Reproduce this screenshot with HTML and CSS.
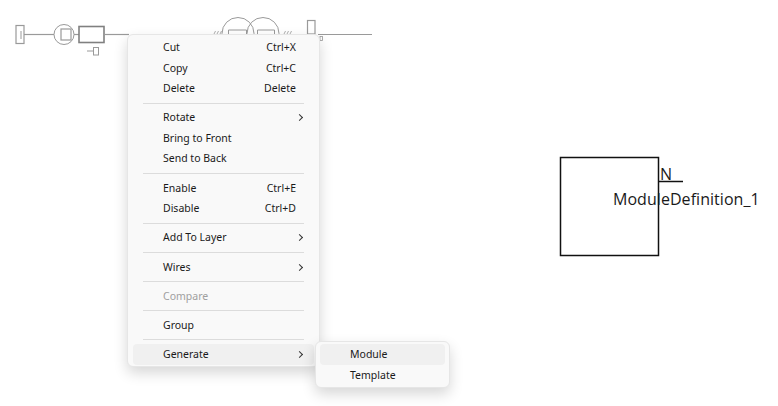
FILE: index.html
```html
<!DOCTYPE html>
<html lang="en">
<head>
  <meta charset="UTF-8">
  <meta name="viewport" content="width=device-width, initial-scale=1.0">
  <title>Module editor</title>
  <link rel="stylesheet" href="styles.css">
</head>
<body>
  <div class="canvas">
    <!-- schematic behind the menu -->
    <svg class="schematic" width="778" height="406" viewBox="0 0 778 406" fill="none">
      <g stroke="#9a9a9a" stroke-width="1.200">
        <rect x="16" y="25.500" width="8" height="18" />
        <path d="M21 31v8" stroke-width="1" />
        <path d="M24 34.500h30" />
        <circle cx="64" cy="34.500" r="10" stroke-width="1" />
        <rect x="61" y="29" width="10" height="11" />
        <path d="M74 34.500h5" />
        <rect x="79" y="26.500" width="25" height="16" stroke="#808080" stroke-width="1.600" />
        <path d="M104 34.500h25" />
        <rect x="93.500" y="47.500" width="5" height="7.500" stroke-width="1" />
        <path d="M87 51h6.500" stroke-width="1" />
        <circle cx="238" cy="33.500" r="16" stroke-width="1" />
        <circle cx="263" cy="33.500" r="16" stroke-width="1" />
        <path d="M228.500 34v-4h18v4M257.500 34v-4h17v4" stroke-width="1" />
        <path d="M214 34l1.500-3M217 34l1.500-3M220 34l1.500-3M284 34l1.500-3M287 34l1.500-3M290 34l1.500-3" stroke-width="0.800" />
        <rect x="307.500" y="20.500" width="7.500" height="13.500" />
        <path d="M318 34.500h54" />
        <rect x="320" y="36.500" width="2.500" height="4" stroke-width="0.800" />
      </g>
      <g stroke="#111" stroke-width="1.500">
        <rect x="560.500" y="157.500" width="98" height="98" />
        <path d="M658 181.500h25" />
      </g>
    </svg>
    <span class="pin-label">N</span>
    <span class="module-label">ModuleDefinition_1</span>

    <div class="menu main-menu">
      <div class="item"><span>Cut</span><span class="key">Ctrl+X</span></div>
      <div class="item"><span>Copy</span><span class="key">Ctrl+C</span></div>
      <div class="item"><span>Delete</span><span class="key">Delete</span></div>
      <div class="sep"></div>
      <div class="item"><span>Rotate</span><span class="arrow"></span></div>
      <div class="item"><span>Bring to Front</span></div>
      <div class="item"><span>Send to Back</span></div>
      <div class="sep"></div>
      <div class="item"><span>Enable</span><span class="key">Ctrl+E</span></div>
      <div class="item"><span>Disable</span><span class="key">Ctrl+D</span></div>
      <div class="sep"></div>
      <div class="item"><span>Add To Layer</span><span class="arrow"></span></div>
      <div class="sep"></div>
      <div class="item"><span>Wires</span><span class="arrow"></span></div>
      <div class="sep"></div>
      <div class="item disabled"><span>Compare</span></div>
      <div class="sep"></div>
      <div class="item"><span>Group</span></div>
      <div class="sep"></div>
      <div class="item active"><span>Generate</span><span class="arrow"></span></div>
    </div>

    <div class="menu sub-menu">
      <div class="item active"><span>Module</span></div>
      <div class="item"><span>Template</span></div>
    </div>
  </div>
</body>
</html>
```

FILE: styles.css
```css
body {
  margin: 0;
  background-color: #fff;
  font-family: "Noto Sans", Arial, sans-serif;
  color: #1a1a1a;
}

.canvas {
  position: relative;
  width: 778px;
  height: 406px;
  overflow: hidden;
}

.schematic {
  position: absolute;
  left: 0;
  top: 0;
}

.pin-label,
.module-label {
  position: absolute;
  font-family: "Open Sans", Arial, sans-serif;
  font-size: 16px;
  line-height: 20px;
  color: #1a1a1a;
}

.pin-label {
  left: 660px;
  top: 164px;
}

.module-label {
  left: 613px;
  top: 189px;
  letter-spacing: 0.05px;
}

.menu {
  position: absolute;
  box-sizing: border-box;
  background-color: #f9f9f9;
  border: 1px solid #e6e6e6;
  border-radius: 6px;
  box-shadow: 0 6px 14px rgba(0, 0, 0, 0.16);
  font-size: 10.500px;
}

.main-menu {
  left: 127px;
  top: 34px;
  width: 193px;
  height: 333px;
  padding: 2.500px 5px;
}

.sub-menu {
  left: 315px;
  top: 341px;
  width: 135px;
  height: 47px;
  padding: 2px 4px;
}

.item {
  display: flex;
  justify-content: space-between;
  align-items: center;
  box-sizing: border-box;
  height: 20.500px;
  padding: 0 12px 1px 30px;
  border-radius: 4px;
}

.sub-menu .item + .item {
  padding-bottom: 0;
}

.item.active {
  background-color: #f0f0f0;
}

.item.disabled {
  color: #a0a0a0;
}

.key {
  margin-right: 6px;
}

/* chevron for items with a submenu */
.arrow {
  width: 4px;
  height: 4px;
  margin-top: 1px;
  border-top: 1px solid #333;
  border-right: 1px solid #333;
  transform: rotate(45deg);
}

.sep {
  height: 1px;
  margin: 3.850px 10px;
  background-color: #dcdcdc;
}
```
